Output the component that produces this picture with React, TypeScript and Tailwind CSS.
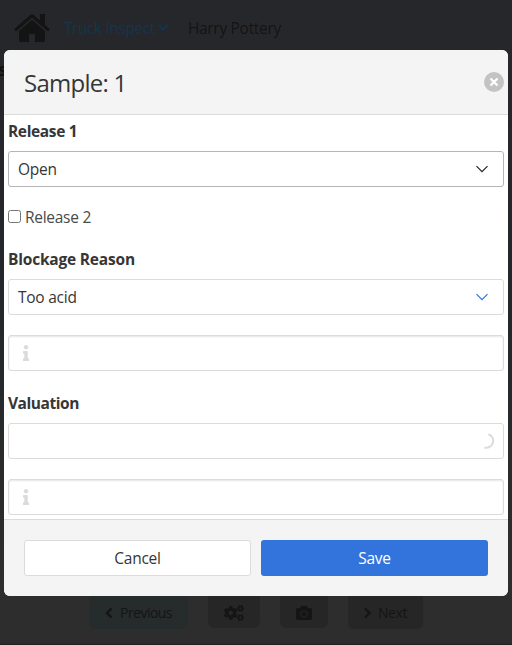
import { useState } from 'react';
import type { ReactNode } from 'react';
import { FaCogs, FaCamera, FaInfo } from 'react-icons/fa';

function Label({ children, className = '' }: { children: ReactNode; className?: string }) {
  return <label className={`block h-6 text-[15.5px] leading-6 font-bold text-[#363636] ${className}`}>{children}</label>;
}

function Chevron({ className }: { className: string }) {
  return (
    <svg className={className} width="14" height="10" viewBox="0 0 14 10" fill="none" stroke="currentColor" strokeWidth="1.2">
      <path d="M1.500 2.200 7 7.700l5.500-5.500" />
    </svg>
  );
}

function HomeIcon() {
  return (
    <svg width="36" height="28" viewBox="0 0 36 28" fill="currentColor">
      <path d="M0 15.200 16.200 1.100Q18 -.5 19.800 1.100L26 6.500V0h5v10.800l5 4.400-2 2.300L18 3.800 2 17.500Z" />
      <path d="M18 5.800 31 17v9.500q0 1.500-1.500 1.500H21v-8h-6v8H6.500Q5 28 5 26.500V17Z" />
    </svg>
  );
}

function BoldChevron({ d, className = '' }: { d: string; className?: string }) {
  return (
    <svg className={className} width="12" height="12" viewBox="0 0 12 12" fill="none" stroke="currentColor" strokeWidth="2.400">
      <path d={d} />
    </svg>
  );
}

function SelectBox({ value, className, chevron }: { value: string; className: string; chevron: string }) {
  return (
    <div className={`flex h-9 items-center justify-between rounded-[3px] border bg-white pr-3.5 pl-[9px] text-[#363636] ${className}`}>
      <span className="tracking-[-0.25px]">{value}</span>
      <Chevron className={chevron} />
    </div>
  );
}

function InfoInput() {
  return (
    <div className="flex h-9 items-center rounded-[3px] border border-[#dbdbdb] bg-white pl-[9px] shadow-[inset_0_1px_2px_rgba(10,10,10,0.1)]">
      <FaInfo className="size-4 text-[#dbdbdb]" />
    </div>
  );
}

function Modal() {
  const [checked, setChecked] = useState(false);
  return (
    <section className="relative mx-1 flex h-[546px] flex-col overflow-hidden rounded-md bg-white">
      <header className="flex h-[65px] shrink-0 items-center justify-between border-b border-[#dbdbdb] bg-[#f4f4f4] pr-1 pl-5">
        <h1 className="pt-0.5 text-2xl leading-6 tracking-[-0.75px] text-[#363636]">Sample: 1</h1>
        <button aria-label="Close" className="flex size-5 items-center justify-center rounded-full bg-[#c3c3c3] text-white">
          <svg width="10" height="10" viewBox="0 0 10 10" stroke="currentColor" strokeWidth="2.300">
            <path d="M1.500 1.500l7 7M8.500 1.500l-7 7" />
          </svg>
        </button>
      </header>
      <div className="h-[404px] shrink-0 px-1 pt-1">
        <Label className="tracking-[-0.36px]">Release 1</Label>
        <SelectBox value="Open" className="mt-2 border-[#b5b5b5]" chevron="text-[#222]" />
        <label className="mt-[18px] flex h-6 items-center gap-1 text-[#4a4a4a]">
          <input
            type="checkbox"
            checked={checked}
            onChange={(e) => setChecked(e.target.checked)}
            className="mb-0.5 size-[13px] appearance-none rounded-[2.500px] border border-[#767676] bg-white checked:bg-[#3273dc]"
          />
          <span className="tracking-[-0.28px]">Release 2</span>
        </label>
        <Label className="mt-[18px] tracking-[-0.2px]">Blockage Reason</Label>
        <SelectBox value="Too acid" className="mt-2 mb-5 border-[#dbdbdb]" chevron="text-[#3273dc]" />
        <InfoInput />
        <Label className="mt-5 tracking-[-0.45px]">Valuation</Label>
        <div className="mt-2 mb-5 flex h-9 items-center justify-end rounded-[3px] border border-[#dbdbdb] bg-white pr-2">
          <svg width="16" height="16" viewBox="0 0 16 16" fill="none" stroke="#dbdbdb" strokeWidth="2">
            <path d="M9.500 1.200A7 7 0 0 1 5.500 14.600" />
          </svg>
        </div>
        <InfoInput />
      </div>
      <footer className="grid h-[77px] shrink-0 grid-cols-2 content-center gap-2.5 border-t border-[#dbdbdb] bg-[#f4f4f4] px-5">
        <button className="h-9 rounded-[3px] border border-[#dbdbdb] bg-white tracking-[-0.25px] text-[#363636]">Cancel</button>
        <button className="h-9 rounded-[3px] bg-[#3273dc] tracking-[-0.25px] text-white">Save</button>
      </footer>
    </section>
  );
}

export default function App() {
  return (
    <main className="relative flex h-[645px] w-[512px] flex-col overflow-hidden border-b border-[#242122] bg-linear-to-b from-[#26272b] from-10% via-[#24282b] via-50% to-[#2d2d2d] to-90% font-['Open_Sans','Noto_Sans',sans-serif] text-[15.5px] leading-6">
      <span className="absolute top-[55px] left-[-2px] text-lg font-bold text-[#111]">s</span>
      <nav className="flex h-[50px] shrink-0 items-center bg-[#26272b] pt-1.5 pl-3.5 text-[#141414]">
        <HomeIcon />
        <span className="ml-3.5 tracking-[-0.42px] text-[#12354f]">Truck Inspect</span>
        <BoldChevron d="M1.500 3 6 7.500l4.500-4.500" className="ml-0.5 text-[#12354f]" />
        <span className="ml-[19px] tracking-[-0.3px]">Harry Pottery</span>
      </nav>
      <Modal />
      <div className="flex h-[33px] shrink-0 items-start pl-[89px] text-sm text-[#151515]">
        <div className="flex h-[33px] w-[99px] items-center justify-center gap-[5px] rounded-b-md bg-[#262b2c] pr-0.5">
          <BoldChevron d="M8.500 1.500 4 6l4.500 4.500" /> <span className="tracking-[-0.55px]">Previous</span>
        </div>
        <div className="ml-5 flex h-8 w-[52px] items-center justify-center rounded-b-md bg-[#262626] pt-px"><FaCogs className="size-5" /></div>
        <div className="ml-5 flex h-8 w-12 items-center justify-center rounded-b-md bg-[#262626] pt-px"><FaCamera className="size-4" /></div>
        <div className="ml-5 flex h-[33px] w-[75px] items-center justify-center gap-[5px] rounded-b-md bg-[#262626] pr-[3px]">
          <BoldChevron d="M4 1.500 8.500 6 4 10.500" /> <span className="tracking-[-0.4px]">Next</span>
        </div>
      </div>
    </main>
  );
}
